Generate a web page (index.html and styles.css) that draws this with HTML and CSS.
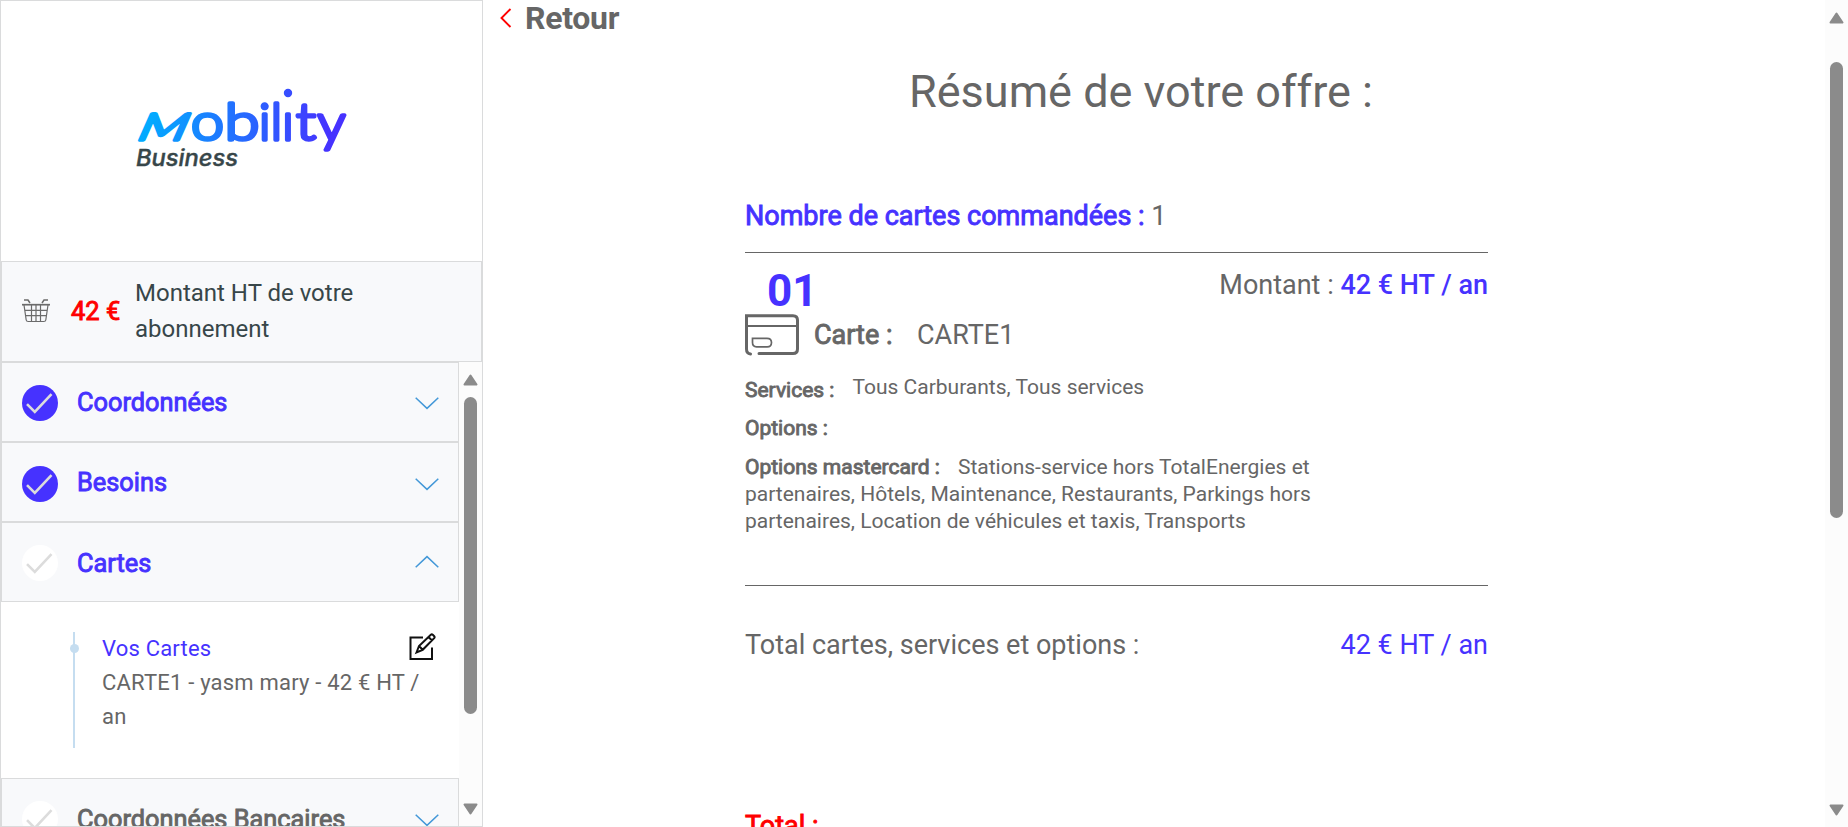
FILE: index.html
```html
<!DOCTYPE html>
<html lang="fr">
<head>
<meta charset="utf-8">
<title>Mobility Business</title>
<link rel="stylesheet" href="styles.css">
</head>
<body>
<svg class="defs" width="0" height="0" aria-hidden="true">
  <symbol id="tick" viewBox="0 0 36 36"><circle cx="18" cy="18" r="18"/><path d="M5 19.2 12.8 27 29.5 9.2" fill="none" stroke="#dcdcdc" stroke-width="2.6"/></symbol>
  <symbol id="chevron" viewBox="0 0 24 13"><path d="M.7.8 12 11.4 23.3.8" fill="none" stroke="#4398d8" stroke-width="1.5"/></symbol>
  <symbol id="arrow" viewBox="0 0 15 12"><path d="M7.5 1.5 13.5 10.5H1.5Z" fill="#8b8b8b" stroke="#8b8b8b" stroke-width="2" stroke-linejoin="round"/></symbol>
</svg>
<div class="app">
  <aside class="sidebar">
    <div class="brand">
      <svg class="logo" width="220" height="90" viewBox="132 82 220 90">
        <defs>
          <linearGradient id="grad" gradientUnits="userSpaceOnUse" x1="138" y1="0" x2="330" y2="0"><stop offset="0" stop-color="#00aeff"/><stop offset="1" stop-color="#4632ff"/></linearGradient>
          <linearGradient id="grad-m" gradientUnits="userSpaceOnUse" x1="0" y1="0" x2="192" y2="0"><stop offset="0" stop-color="#00aeff"/><stop offset="1" stop-color="#4632ff"/></linearGradient>
          <clipPath id="clip-i"><rect x="284" y="111" width="8" height="34" rx="3"/></clipPath>
        </defs>
        <g class="wordmark">
          <text class="wordmark-m" transform="translate(135 140) skewX(-24)" textLength="48" lengthAdjust="spacingAndGlyphs">M</text>
          <text x="191" y="140" textLength="33" lengthAdjust="spacingAndGlyphs">o</text>
          <text x="224.500" y="140" textLength="35" lengthAdjust="spacingAndGlyphs">b</text>
          <text x="264.7" y="140" text-anchor="middle">i</text>
          <text x="276.5" y="140" text-anchor="middle">l</text>
          <g clip-path="url(#clip-i)"><text x="288" y="140" text-anchor="middle">i</text></g>
          <circle cx="288" cy="93" r="2.400"/>
          <text x="296" y="140" textLength="20" lengthAdjust="spacingAndGlyphs">t</text>
          <text x="317.500" y="141" textLength="28" lengthAdjust="spacingAndGlyphs">y</text>
        </g>
        <text class="tagline" x="136" y="166" textLength="102" lengthAdjust="spacingAndGlyphs">Business</text>
      </svg>
    </div>
    <div class="summary">
      <svg class="basket" width="28" height="24" viewBox="0 0 28 24" fill="none" stroke="#6b6b6b" stroke-width="1.2"><path d="M2 1h4l2 3M26 1h-4l-2 3" stroke-width="1.5"/><path d="M0 5.7h28" stroke-width="1.7"/><path d="M2 6l2.2 15q.2 1.5 2 1.5h15.600q1.800 0 2-1.500L26 6M3 11.300h22M4 16.700h20.500M9.500 6v16.500M14 6v16.500M18.500 6v16.500"/></svg>
      <strong class="amount faux">42 €</strong>
      <span class="label">Montant HT de votre abonnement</span>
    </div>
    <div class="steps-wrap">
      <div class="steps">
        <div class="step done"><svg class="tick"><use href="#tick"/></svg><span class="faux">Coordonnées</span><svg class="chev"><use href="#chevron"/></svg></div>
        <div class="step done second"><svg class="tick"><use href="#tick"/></svg><span class="faux">Besoins</span><svg class="chev"><use href="#chevron"/></svg></div>
        <div class="step open"><svg class="tick"><use href="#tick"/></svg><span class="faux">Cartes</span><svg class="chev"><use href="#chevron"/></svg></div>
        <div class="panel">
          <div class="timeline"><i></i></div>
          <div class="cards"><a>Vos Cartes</a><p>CARTE1 - yasm mary - 42 € HT / an</p></div>
          <svg class="edit" width="28" height="28" viewBox="0 0 28 28" fill="none" stroke="#111" stroke-width="2"><path d="M14 4.500H1.500v21.500h21.500V14.500"/><path d="M7.500 19.500 10 13 21.800 1.800q1-.8 2 0l1.400 1.400q.8 1 0 2L13.700 16.800ZM19.500 4l3.500 3.500M10 13l3.700 3.800"/></svg>
        </div>
        <div class="step todo"><svg class="tick"><use href="#tick"/></svg><span class="faux">Coordonnées Bancaires</span><svg class="chev"><use href="#chevron"/></svg></div>
      </div>
      <div class="scroll inner"><svg class="arrow"><use href="#arrow"/></svg><div class="thumb"></div><svg class="arrow down"><use href="#arrow"/></svg></div>
    </div>
  </aside>
  <main class="main">
    <a class="back"><svg width="12" height="20" viewBox="0 0 12 20" fill="none" stroke="red" stroke-width="1.900"><path d="M10.500 1 1.500 10l9 9"/></svg><span>Retour</span></a>
    <h1>Résumé de votre offre :</h1>
    <section class="offer">
      <p class="count"><span class="faux blue">Nombre de cartes commandées :</span> 1</p>
      <div class="card">
        <div class="card-head">
          <div class="number">01</div>
          <div class="price">Montant : <b>42 € HT / an</b></div>
        </div>
        <div class="card-name">
          <svg width="54" height="42" viewBox="0 0 54 42" fill="none" stroke="#666" stroke-width="3"><path d="M5.500 40Q1.500 39.500 1.500 35V1.800H48q4.500 0 4.500 4.500V35q0 4.500-4.500 4.500H14" stroke-linecap="round"/><path d="M2 12h50" stroke-width="2"/><path d="M7.500 24.300H22q4.500 0 4.500 4.300T22 32.800H11.500q-4 0-4-4.200Z" stroke-width="1.700"/></svg>
          <span class="faux">Carte :</span><span class="name">CARTE1</span>
        </div>
        <p class="line services"><span class="faux">Services :</span><span class="value">Tous Carburants, Tous services</span></p>
        <p class="line options"><span class="faux">Options :</span></p>
        <p class="line"><span class="faux">Options mastercard :</span><span class="value">Stations-service hors TotalEnergies et</span><br>partenaires, Hôtels, Maintenance, Restaurants, Parkings hors<br>partenaires, Location de véhicules et taxis, Transports</p>
      </div>
      <div class="subtotal"><span>Total cartes, services et options :</span><span class="blue">42 € HT / an</span></div>
      <div class="total faux">Total :</div>
    </section>
  </main>
  <div class="scroll outer"><svg class="arrow"><use href="#arrow"/></svg><div class="thumb"></div><svg class="arrow down"><use href="#arrow"/></svg></div>
</div>
</body>
</html>
```
FILE: styles.css
```css
* { box-sizing: border-box; }
body { margin: 0; background: #fff; color: #666; font-family: Roboto, "Liberation Sans", sans-serif; overflow: hidden; }
p, h1 { margin: 0; }
.defs { display: none; }
.blue { color: #4632ff; }
.faux { font-weight: 400; -webkit-text-stroke: 0.9px currentColor; }
.app { display: flex; height: 827px; overflow: hidden; }

.sidebar { width: 483px; border: 1px solid #dadbdc; display: flex; flex-direction: column; overflow: hidden; flex: none; }
.brand { height: 260px; flex: none; padding: 81px 0 0 131px; }
.logo { display: block; }
.wordmark { font-family: Lato, sans-serif; font-weight: 300; font-size: 51px; fill: url(#grad); stroke: url(#grad); stroke-width: 3.600px; stroke-linejoin: round; }
.wordmark-m { font-size: 37px; fill: url(#grad-m); stroke: url(#grad-m); }
.tagline { font: italic 500 22.500px Inter, sans-serif; fill: #374649; stroke: #374649; stroke-width: 0.400px; }
.summary { height: 101px; flex: none; border: 1px solid #dadbdc; background: #f8f9fb; display: flex; align-items: center; padding: 0 0 2px 20px; color: #374649; }
.summary .basket { margin-right: 21px; }
.amount { color: red; font-size: 25.500px; width: 64px; }
.label { font-size: 24px; line-height: 36px; width: 250px; }
.steps-wrap { flex: 1; display: flex; min-height: 0; }
.steps { width: 458px; overflow: hidden; }
.step { height: 80px; border: 1px solid #dadbdc; background: #f8f9fb; display: flex; align-items: center; padding: 0 19px 0 20px; font-size: 25.350px; color: #666; }
.step.done, .step.open { color: #4632ff; }
.step span { flex: 1; margin: -1px 0 0 19px; }
.step.open span, .step.todo span { margin-top: 1px; }
.tick { width: 36px; height: 36px; fill: #fff; margin-top: 2px; }
.done .tick { fill: #4632ff; }
.chev { width: 24px; height: 13px; margin-top: 3px; }
.second .tick { margin-top: 4px; }
.second .chev { margin-top: 5px; }
.todo .chev { margin-top: 5px; }
.open .chev { transform: rotate(180deg); margin-top: -2px; }
.panel { height: 176px; display: flex; padding: 30px 22px 0 72px; }
.timeline { width: 2px; height: 116px; background: #c5ddf0; margin-right: 27px; flex: none; }
.timeline i { display: block; width: 9px; height: 9px; border-radius: 50%; background: #c5ddf0; margin: 12px 0 0 -3.500px; }
.cards { font-size: 22px; line-height: 34px; letter-spacing: 0.200px; flex: 1; }
.cards a { color: #4632ff; }
.edit { margin: 1px 0 0 -30px; flex: none; }

.scroll { background: #fcfcfc; display: flex; flex-direction: column; align-items: center; flex: none; }
.arrow { width: 15px; height: 12px; flex: none; }
.arrow.down { transform: rotate(180deg); margin-top: auto; }
.thumb { width: 13px; border-radius: 7px; background: #8b8b8b; flex: none; }
.inner { width: 23px; padding: 12px 0 11px; }
.inner .thumb { height: 317px; margin-top: 11px; }
.outer { width: 23px; padding: 12px 0 11px; }
.outer .thumb { height: 456px; margin-top: 38px; }

.main { flex: 1; min-width: 0; }
.back { display: flex; align-items: center; height: 36px; padding-left: 17px; gap: 13px; font-size: 32px; font-weight: 700; letter-spacing: -0.3px; }
.back svg { flex: none; }
h1 { font-size: 45px; font-weight: 400; line-height: 54px; margin-top: 29px; padding-right: 26px; text-align: center; }
.offer { width: 743px; margin: 77px 0 0 262px; font-size: 27px; }
.count { height: 57px; line-height: 40px; border-bottom: 1px solid #666; }
.card { height: 333px; border-bottom: 1px solid #666; }
.card-head { display: flex; justify-content: space-between; height: 61px; padding-top: 12px; }
.number { font-size: 44px; font-weight: 700; line-height: 52px; padding-left: 22px; color: #4632ff; }
.price { line-height: 40px; }
.price b { font-weight: 500; color: #4632ff; }
.card-name { display: flex; align-items: center; height: 42px; }
.card-name .faux { margin-left: 15px; }
.card-name .name { margin-left: 24.500px; }
.line { font-size: 21px; line-height: 27px; margin-top: 12px; white-space: nowrap; }
.services { display: flex; margin-top: 21px; }
.options { margin-top: 11px; }
.value { margin-left: 18px; }
.services .value { margin-top: -3px; }
.subtotal { display: flex; justify-content: space-between; line-height: 40px; margin-top: 39px; }
.total { color: red; line-height: 40px; margin-top: 141px; }
```
